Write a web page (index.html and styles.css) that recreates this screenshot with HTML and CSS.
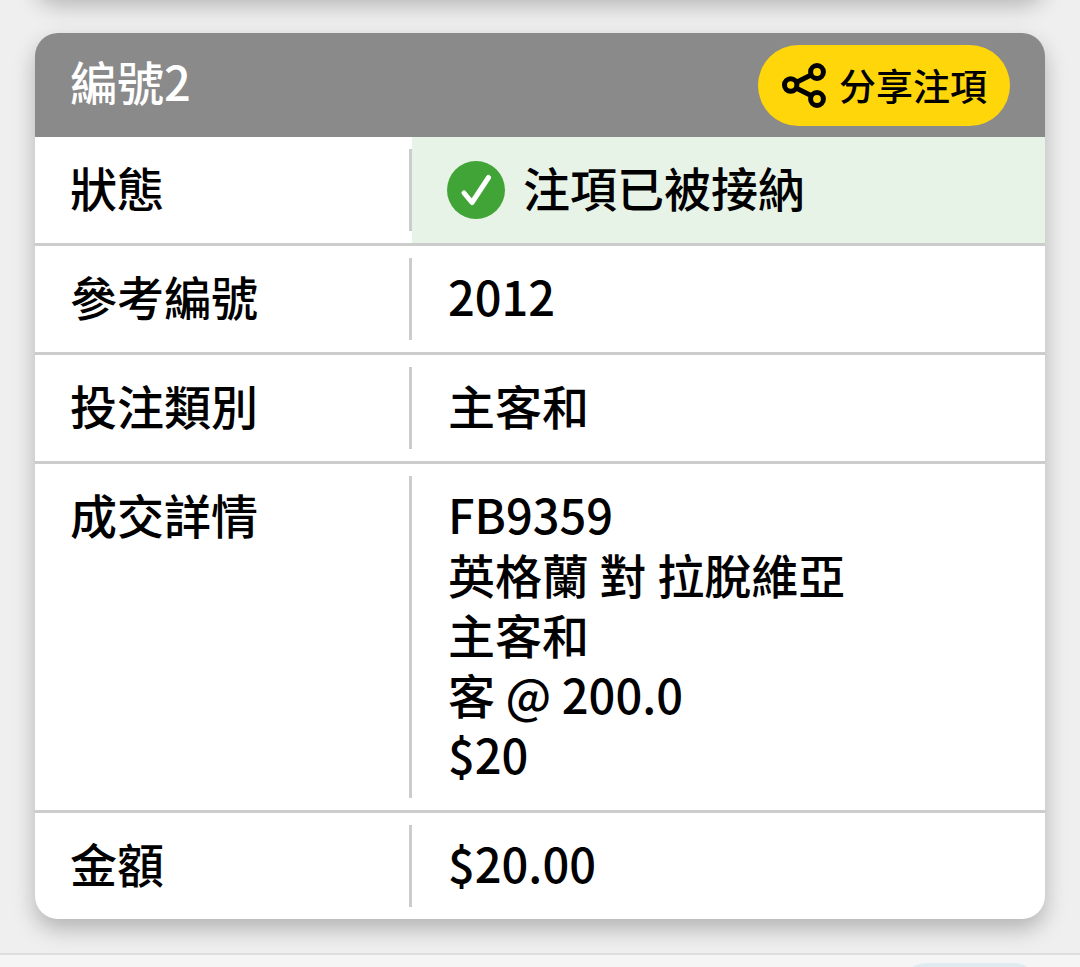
FILE: index.html
```
<!DOCTYPE html>
<html lang="zh-HK">
<head>
<meta charset="UTF-8"/>
<meta name="viewport" content="width=device-width, initial-scale=1.0"/>
<title>注項</title>
<link rel="stylesheet" href="styles.css">
</head>
<body>

<main class="bet-list">
  <!-- bottom edge of the previous bet -->
  <div class="card card-prev"></div>

  <section class="card">
    <div class="card-header">
      <h2>編號2</h2>
      <button type="button" class="share-btn">
        <svg class="share-icon" viewBox="0 0 44 46" aria-hidden="true">
          <path d="M14 20.500L29 13M14 26L29 33.500"/>
          <circle cx="8.700" cy="23" r="6.200"/>
          <circle cx="35" cy="10" r="6.400"/>
          <circle cx="35" cy="37" r="6.400"/>
        </svg>
        分享注項
      </button>
    </div>
    <table class="details">
      <tr>
        <th scope="row">狀態</th>
        <td class="accepted">
          <div class="status">
            <svg class="status-icon" viewBox="0 0 58 58" aria-hidden="true">
              <circle cx="29" cy="29" r="29"/>
              <path d="M17 32L25 41.500L41.500 16.500"/>
            </svg>
            注項已被接納
          </div>
        </td>
      </tr>
      <tr>
        <th scope="row">參考編號</th>
        <td>2012</td>
      </tr>
      <tr>
        <th scope="row">投注類別</th>
        <td>主客和</td>
      </tr>
      <tr>
        <th scope="row">成交詳情</th>
        <td>FB9359<br>英格蘭 對 拉脫維亞<br>主客和<br>客 @ 200.0<br>$20</td>
      </tr>
      <tr>
        <th scope="row">金額</th>
        <td>$20.00</td>
      </tr>
    </table>
  </section>
</main>

<footer class="bottom-bar">
  <div class="bottom-pill"></div>
</footer>

</body>
</html>
```

FILE: styles.css
```
*{box-sizing:border-box;margin:0;padding:0;}
body{font-family:"Noto Sans CJK TC",sans-serif;font-weight:500;background:#efefef;color:#000;min-height:100vh;display:flex;flex-direction:column;overflow:hidden;}

/* cards */
.bet-list{display:flex;flex-direction:column;gap:38px;padding:0 35px 34px;}
.card{background:#fff;border-radius:23px;box-shadow:0 10px 22px rgba(0,0,0,0.25);}
.card-prev{height:60px;margin-top:-65px;}
.card-header{display:flex;justify-content:space-between;align-items:center;min-height:104px;padding:11px 35px;background:#8a8a8a;border-radius:23px 23px 0 0;}
.card-header h2{padding-bottom:8px;font-size:47px;line-height:60px;font-weight:500;color:#fff;}
.share-btn{display:flex;align-items:center;gap:13px;height:81px;padding:0 23px 1px 24px;border:none;border-radius:41px;background:#ffd60a;color:#000;font-family:inherit;font-size:37px;font-weight:500;cursor:pointer;}
.share-icon{width:44px;height:46px;fill:none;stroke:#000;stroke-width:5;}

/* detail rows */
.details{width:100%;border-spacing:0;table-layout:fixed;font-size:47px;line-height:60px;}
.details th,.details td{padding:20px 36px 26px;border-bottom:3px solid #ccc;font-weight:500;text-align:left;vertical-align:top;}
.details th{width:377px;padding-left:35px;background:linear-gradient(#ccc,#ccc) right center/3px calc(100% - 24px) no-repeat;}
.details tr:last-child th,.details tr:last-child td{border-bottom:none;}
.details .accepted{padding:20px 35px 24px;background:#e8f3e8;}
.status{display:flex;align-items:flex-start;gap:18px;}
.status-icon{width:58px;height:58px;margin-top:4px;flex:none;}
.status-icon circle{fill:#41a437;}
.status-icon path{fill:none;stroke:#fff;stroke-width:5;stroke-linecap:round;stroke-linejoin:round;}

/* bottom bar */
.bottom-bar{position:relative;flex:1;display:flex;justify-content:flex-end;padding:8px 42px 0;background:#f5f5f5;border-top:2px solid #dedede;overflow:hidden;}
.bottom-pill{width:136px;height:60px;border-radius:24px;background:#e0ebf1;margin-bottom:-60px;}
```
